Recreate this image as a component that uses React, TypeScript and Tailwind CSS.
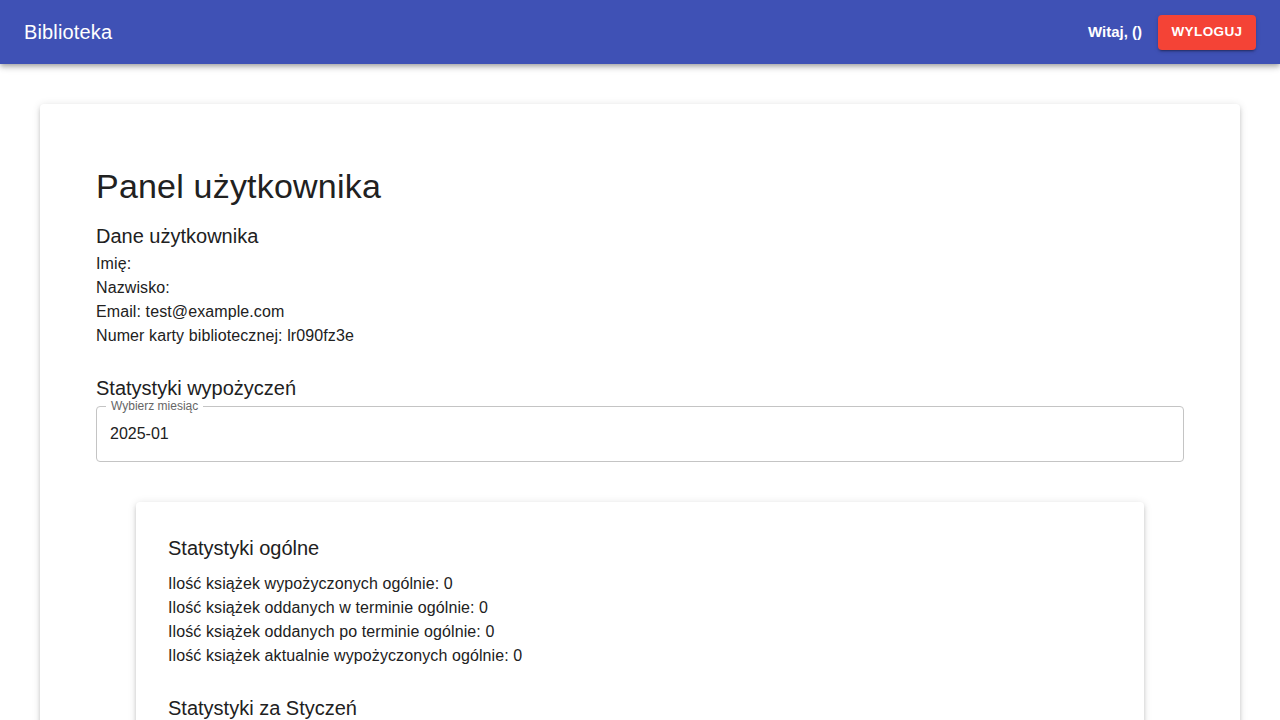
import React from 'react';

const font = "font-['Liberation_Sans','Helvetica',Arial,sans-serif]";

export default function App() {
    return (
        <div className={`min-h-screen bg-white text-[#212121] ${font}`}>
            {/* App bar */}
            <header className="h-16 bg-[#3f51b5] text-white flex items-center justify-between px-6 shadow-[0_2px_4px_-1px_rgba(0,0,0,0.2),0_4px_5px_0_rgba(0,0,0,0.14),0_1px_10px_0_rgba(0,0,0,0.12)] relative z-10">
                <h1 className="text-[20px] leading-8 font-medium tracking-[0.15px]">Biblioteka</h1>
                <div className="flex items-center gap-4">
                    <span className="text-[15px] font-bold">Witaj, ()</span>
                    <button className="w-[98px] h-[35px] rounded bg-[#f44336] text-white text-[13.5px] font-bold tracking-[0.4px] uppercase shadow-[0_3px_1px_-2px_rgba(0,0,0,0.2),0_2px_2px_0_rgba(0,0,0,0.14),0_1px_5px_0_rgba(0,0,0,0.12)]">
                        Wyloguj
                    </button>
                </div>
            </header>

            {/* Main */}
            <main className="px-10 pt-10">
                <div className="rounded bg-white shadow-[0_3px_3px_-2px_rgba(0,0,0,0.2),0_3px_4px_0_rgba(0,0,0,0.14),0_1px_8px_0_rgba(0,0,0,0.12)] px-14 pt-[61px] pb-10">
                    <h2 className="text-[34px] leading-[42px] tracking-[0.2px]">Panel użytkownika</h2>

                    <h3 className="text-[20px] leading-8 mt-[13px]">Dane użytkownika</h3>
                    <div className="text-[16px] leading-6 tracking-[0.1px]">
                        <p>Imię: </p>
                        <p>Nazwisko: </p>
                        <p>Email: test@example.com</p>
                        <p>Numer karty bibliotecznej: lr090fz3e</p>
                    </div>

                    <h3 className="text-[20px] leading-8 mt-6">Statystyki wypożyczeń</h3>
                    <div className="relative mt-[2px] h-14 rounded border border-[#c4c4c4] flex items-center px-[13px]">
                        <span className="absolute -top-[8px] left-[9px] bg-white px-[5px] text-[12px] leading-[14px] text-[#666]">Wybierz miesiąc</span>
                        <span className="text-[16px]">2025-01</span>
                    </div>

                    <div className="mx-10 mt-10 rounded bg-white shadow-[0_3px_3px_-2px_rgba(0,0,0,0.2),0_3px_4px_0_rgba(0,0,0,0.14),0_1px_8px_0_rgba(0,0,0,0.12)] px-8 pt-[30px] pb-8">
                        <h3 className="text-[20px] leading-8">Statystyki ogólne</h3>
                        <div className="text-[16px] leading-6 mt-[8px] tracking-[0.1px]">
                            <p>Ilość książek wypożyczonych ogólnie: 0</p>
                            <p>Ilość książek oddanych w terminie ogólnie: 0</p>
                            <p>Ilość książek oddanych po terminie ogólnie: 0</p>
                            <p>Ilość książek aktualnie wypożyczonych ogólnie: 0</p>
                        </div>

                        <h3 className="text-[20px] leading-8 mt-6">Statystyki za Styczeń</h3>
                        <div className="text-[16px] leading-6 mt-[8px] tracking-[0.1px]">
                            <p>Ilość książek wypożyczonych w tym miesiącu: 0</p>
                            <p>Ilość książek oddanych w terminie w tym miesiącu: 0</p>
                            <p>Ilość książek oddanych po terminie w tym miesiącu: 0</p>
                        </div>
                    </div>
                </div>
            </main>
        </div>
    );
}
